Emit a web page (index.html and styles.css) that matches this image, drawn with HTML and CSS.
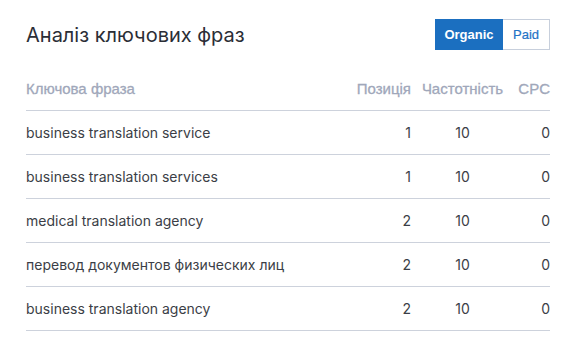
FILE: index.html
```html
<!DOCTYPE html>
<html lang="uk">
<head>
<meta charset="utf-8">
<link rel="stylesheet" href="styles.css">
</head>
<body>
<div class="card">
  <div class="head">
    <h2 class="title">Аналіз ключових фраз</h2>
    <div class="toggle">
      <button class="tbtn active">Organic</button>
      <button class="tbtn">Paid</button>
    </div>
  </div>
  <table class="kw">
    <thead>
      <tr>
        <th class="c-phrase">Ключова фраза</th>
        <th class="c-pos">Позиція</th>
        <th class="c-freq">Частотність</th>
        <th class="c-cpc">CPC</th>
      </tr>
    </thead>
    <tbody>
      <tr><td class="c-phrase">business translation service</td><td class="c-pos">1</td><td class="c-freq">10</td><td class="c-cpc">0</td></tr>
      <tr><td class="c-phrase">business translation services</td><td class="c-pos">1</td><td class="c-freq">10</td><td class="c-cpc">0</td></tr>
      <tr><td class="c-phrase">medical translation agency</td><td class="c-pos">2</td><td class="c-freq">10</td><td class="c-cpc">0</td></tr>
      <tr><td class="c-phrase">перевод документов физических лиц</td><td class="c-pos">2</td><td class="c-freq">10</td><td class="c-cpc">0</td></tr>
      <tr><td class="c-phrase">business translation agency</td><td class="c-pos">2</td><td class="c-freq">10</td><td class="c-cpc">0</td></tr>
    </tbody>
  </table>
</div>
</body>
</html>
```
FILE: styles.css
```css
html, body {
  margin: 0;
  padding: 0;
  background: #ffffff;
}
body {
  font-family: Inter, "Noto Sans", sans-serif;
  color: #3b3e46;
}
.card {
  width: 524px;
  padding: 19px 26px 0 26px;
}
.head {
  display: flex;
  justify-content: space-between;
  align-items: center;
  height: 31px;
}
.title {
  margin: 0;
  font-size: 20px;
  font-weight: 400;
  color: #2b2e36;
}
.toggle {
  display: flex;
}
.tbtn {
  font-family: "Liberation Sans", Arial, sans-serif;
  font-size: 13px;
  height: 31px;
  border: 1px solid #c7cfdc;
  background: #fff;
  color: #2473c6;
  font-weight: 400;
  -webkit-text-stroke: 0.2px #2473c6;
  padding: 0;
  margin: 0;
}
.tbtn.active {
  width: 68px;
  background: #1b6fc0;
  border-color: #1b6fc0;
  color: #fff;
  font-weight: 700;
  -webkit-text-stroke: 0;
}
.tbtn + .tbtn {
  width: 47px;
  border-left: none;
}
.kw {
  width: 100%;
  border-collapse: collapse;
  margin-top: 17px;
  font-size: 14px;
}
.kw th {
  font-family: "Liberation Sans", Arial, sans-serif;
  font-weight: 400;
  color: #a0a7ba;
  -webkit-text-stroke: 0.3px #a0a7ba;
  height: 43px;
  padding: 0;
  border-bottom: 1px solid #cdd2dc;
  font-size: 15px;
}
.kw td {
  height: 43px;
  padding: 0;
  border-bottom: 1px solid #cdd2dc;
}
.c-phrase { text-align: left; }
.c-pos { text-align: right; width: 55px; padding-left: 10px; }
.kw .c-freq { text-align: center; width: 83px; padding-left: 10px; }
.c-cpc { text-align: right; width: 46px; }
```
